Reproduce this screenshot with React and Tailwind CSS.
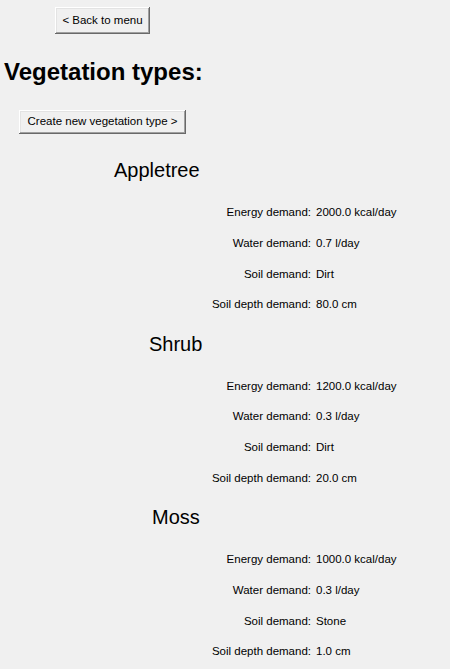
import React from 'react';

// Vegetation data shown in the list
const types = [
  { name: 'Appletree', indent: 'pl-[114px]', energy: '2000.0 kcal/day', water: '0.7 l/day', soil: 'Dirt', depth: '80.0 cm' },
  { name: 'Shrub', indent: 'pl-[149px]', energy: '1200.0 kcal/day', water: '0.3 l/day', soil: 'Dirt', depth: '20.0 cm' },
  { name: 'Moss', indent: 'pl-[152px]', energy: '1000.0 kcal/day', water: '0.3 l/day', soil: 'Stone', depth: '1.0 cm' },
];

// Raised Windows-classic style button
const TkButton = ({ children, className }) => (
  <button
    className={`flex items-center justify-center bg-[#f0f0f0] text-[11.5px] text-black shadow-[inset_-1px_-1px_#696969,inset_1px_1px_#ffffff,inset_-2px_-2px_#a0a0a0,inset_2px_2px_#e3e3e3] ${className}`}
  >
    {children}
  </button>
);

const Row = ({ label, value }) => (
  <div className="flex h-[30.67px] items-center text-[11.5px] text-black">
    <span className="w-[311px] text-right">{label}</span>
    <span className="pl-[5px]">{value}</span>
  </div>
);

const App = () => {
  return (
    <div className="min-h-screen w-full bg-[#f0f0f0] pt-[7px] font-['Liberation_Sans',Arial,sans-serif]">
      <TkButton className="ml-[55px] h-[27px] w-[95px]">&lt; Back to menu</TkButton>

      <h1 className="mt-[24px] pl-[4px] text-[24px] font-bold leading-[28px] text-black">Vegetation types:</h1>

      <TkButton className="ml-[19px] mt-[24px] h-[24px] w-[167px]">Create new vegetation type &gt;</TkButton>

      <div className="mt-[24px] flex flex-col">
        {types.map((t) => (
          <div key={t.name} className="pb-[11.5px]">
            <h2 className={`${t.indent} h-[24px] text-[20px] leading-[24px] text-black`}>{t.name}</h2>
            <div className="mt-[15.5px]">
              <Row label="Energy demand:" value={t.energy} />
              <Row label="Water demand:" value={t.water} />
              <Row label="Soil demand:" value={t.soil} />
              <Row label="Soil depth demand:" value={t.depth} />
            </div>
          </div>
        ))}
      </div>
    </div>
  );
};

export default App;
